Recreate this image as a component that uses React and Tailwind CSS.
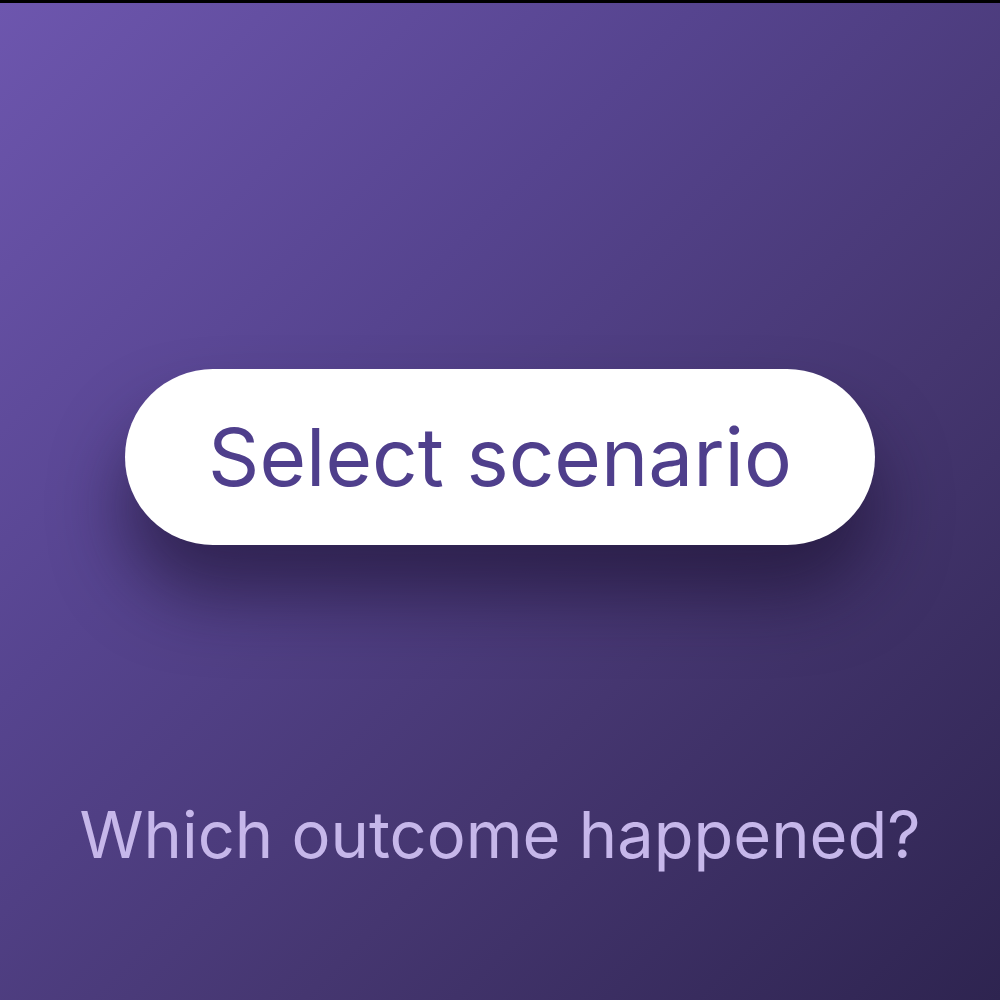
export default function App() {
  return (
    <div
      className="w-[1000px] h-[1000px] border-t-[3px] border-black bg-[linear-gradient(135deg,#6d56ae_0%,#56448f_35%,#453670_65%,#2e2450_100%)] flex flex-col items-center"
      style={{ fontFamily: "Inter, 'Noto Sans', sans-serif" }}
    >
      <div className="mt-[366px] w-[750px] h-[176px] rounded-full bg-white flex items-center justify-center shadow-[0_50px_70px_rgba(25,15,45,0.6)]">
        <span className="text-[80px] leading-none text-[#4f3f8c]">Select scenario</span>
      </div>
      <div className="mt-[250px] text-[65px] leading-[80px] text-[#c6b7ea]">
        Which outcome happened?
      </div>
    </div>
  );
}
